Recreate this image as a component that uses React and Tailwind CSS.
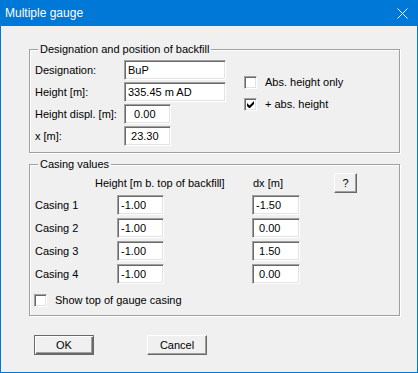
import React from 'react';

const sunken =
  'border border-t-[#a0a0a0] border-l-[#a0a0a0] border-r-white border-b-white shadow-[inset_1px_1px_0_#696969,inset_-1px_-1px_0_#e3e3e3] bg-white';

const raised =
  'border border-t-white border-l-white border-r-[#696969] border-b-[#696969] shadow-[inset_-1px_-1px_0_#a0a0a0] bg-[#f0f0f0]';

function Field({ value, w }) {
  return (
    <div className={`${sunken} ${w} h-[20px] flex items-center pl-[3px] whitespace-pre leading-none`}>
      {value}
    </div>
  );
}

function Check({ checked, label }) {
  return (
    <div className="flex items-center h-[13px]">
      <div className={`${sunken} w-[13px] h-[13px] flex items-center justify-center`}>
        {checked && (
          <svg width="7" height="7" viewBox="0 0 7 7">
            <path d="M0 2v3l2 2h1l4-4V0L2.5 4.5z" fill="#000" />
          </svg>
        )}
      </div>
      <span className="ml-[8px] whitespace-nowrap">{label}</span>
    </div>
  );
}

function GroupBox({ title, className, children }) {
  return (
    <div
      className={`relative ml-[28px] w-[371px] border border-[#a0a0a0] shadow-[inset_1px_1px_0_#fff,1px_1px_0_#fff] ${className}`}
    >
      <span className="absolute -top-[8px] left-[8px] px-[2px] bg-[#f0f0f0] leading-[14px] whitespace-nowrap">
        {title}
      </span>
      {children}
    </div>
  );
}

const casings = [
  { name: 'Casing 1', h: '-1.00', dx: '-1.50' },
  { name: 'Casing 2', h: '-1.00', dx: ' 0.00' },
  { name: 'Casing 3', h: '-1.00', dx: ' 1.50' },
  { name: 'Casing 4', h: '-1.00', dx: ' 0.00' },
];

export default function App() {
  return (
    <div className="w-[418px] h-[373px] bg-white font-['Liberation_Sans',Arial,sans-serif] text-[11px] text-black">
      <div className="w-[418px] h-[373px] bg-[#0078d7] px-[1px] pb-[1px] flex flex-col">
        {/* Title bar */}
        <div className="h-[26px] flex items-center justify-between text-white">
          <span className="ml-[4px] text-[12px]">Multiple gauge</span>
          <svg width="11" height="11" viewBox="0 0 11 11" className="mr-[9px]">
            <path d="M0.5 0.5l10 10M10.5 0.5l-10 10" stroke="#fff" strokeWidth="1" />
          </svg>
        </div>

        <div className="flex-1 bg-[#f0f0f0] pt-[23px]">
          {/* Designation and position */}
          <GroupBox title="Designation and position of backfill" className="h-[104px]">
            <div className="flex pt-[10px] pl-[5px]">
              <div className="flex flex-col gap-[2px]">
                <div className="flex items-center">
                  <span className="w-[89px]">Designation:</span>
                  <Field value="BuP" w="w-[102px]" />
                </div>
                <div className="flex items-center">
                  <span className="w-[89px]">Height [m]:</span>
                  <Field value="335.45 m AD" w="w-[102px]" />
                </div>
                <div className="flex items-center">
                  <span className="w-[89px]">Height displ. [m]:</span>
                  <Field value="  0.00" w="w-[47px]" />
                </div>
                <div className="flex items-center">
                  <span className="w-[89px]">x [m]:</span>
                  <Field value=" 23.30" w="w-[47px]" />
                </div>
              </div>
              <div className="flex flex-col gap-[9px] ml-[18px] pt-[16px]">
                <Check label="Abs. height only" />
                <Check checked label="+ abs. height" />
              </div>
            </div>
          </GroupBox>

          {/* Casing values */}
          <GroupBox title="Casing values" className="h-[152px] mt-[11px]">
            <div className="flex flex-col pt-[8px] pl-[5px]">
              <div className="flex items-center h-[20px]">
                <span className="ml-[60px] w-[157px] whitespace-nowrap">Height [m b. top of backfill]</span>
                <span className="w-[82px] pl-[1px]">dx [m]</span>
                <button className={`${raised} w-[23px] h-[20px] flex items-center justify-center leading-none`}>
                  ?
                </button>
              </div>
              <div className="flex flex-col gap-[3px] mt-[2px]">
                {casings.map((c) => (
                  <div key={c.name} className="flex items-center">
                    <span className="w-[82px]">{c.name}</span>
                    <Field value={c.h} w="w-[47px]" />
                    <div className="ml-[88px]">
                      <Field value={c.dx} w="w-[48px]" />
                    </div>
                  </div>
                ))}
              </div>
              <div className="mt-[10px] -ml-[1px]">
                <Check label="Show top of gauge casing" />
              </div>
            </div>
          </GroupBox>

          {/* Buttons */}
          <div className="flex ml-[33px] mt-[19px] gap-[53px]">
            <button className="w-[60px] h-[20px] border border-[#696969] bg-[#f0f0f0] shadow-[inset_1px_1px_0_#fff,inset_-1px_-1px_0_#696969,inset_-2px_-2px_0_#a0a0a0] flex items-center justify-center leading-none">
              OK
            </button>
            <button className={`${raised} w-[60px] h-[20px] flex items-center justify-center leading-none`}>
              Cancel
            </button>
          </div>
        </div>
      </div>
    </div>
  );
}
